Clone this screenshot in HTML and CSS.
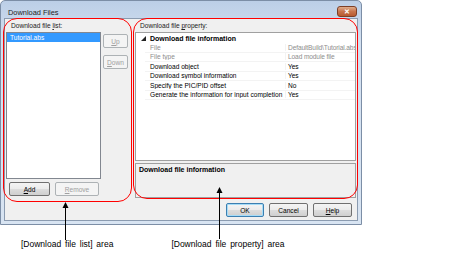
FILE: index.html
```html
<!DOCTYPE html>
<html lang="en">

<head>
    <meta charset="UTF-8">
    <title>Download Files</title>
    <link rel="stylesheet" href="styles.css">
</head>

<body>
    <div class="figure">
        <div class="window">
            <div class="titlebar">
                <span class="title">Download Files</span>
                <span class="close">&#x2715;</span>
            </div>
            <div class="client">
                <div class="panes">
                    <!-- Download file list -->
                    <div class="left-pane">
                        <div class="pane-label">Download file <u>l</u>ist:</div>
                        <div class="list-row">
                            <div class="listbox">
                                <div class="list-item selected">Tutorial.abs</div>
                            </div>
                            <div class="side-buttons">
                                <button class="btn side" disabled><u>U</u>p</button>
                                <button class="btn side" disabled><u>D</u>own</button>
                            </div>
                        </div>
                        <div class="add-row">
                            <button class="btn add"><u>A</u>dd</button>
                            <button class="btn remove" disabled><u>R</u>emove</button>
                        </div>
                    </div>

                    <!-- Download file property -->
                    <div class="right-pane">
                        <div class="pane-label">Download file <u>p</u>roperty:</div>
                        <div class="grid">
                            <div class="category">
                                <svg class="expander" width="5" height="5" viewBox="0 0 5 5">
                                    <polygon points="5,0 5,5 0,5" fill="#222" />
                                </svg>
                                <span>Download file information</span>
                            </div>
                            <div class="prop disabled">
                                <span class="name">File</span>
                                <span class="value">DefaultBuild\Tutorial.abs</span>
                            </div>
                            <div class="prop disabled">
                                <span class="name">File type</span>
                                <span class="value">Load module file</span>
                            </div>
                            <div class="prop">
                                <span class="name">Download object</span>
                                <span class="value">Yes</span>
                            </div>
                            <div class="prop">
                                <span class="name">Download symbol information</span>
                                <span class="value">Yes</span>
                            </div>
                            <div class="prop">
                                <span class="name">Specify the PIC/PID offset</span>
                                <span class="value">No</span>
                            </div>
                            <div class="prop">
                                <span class="name">Generate the information for input completion</span>
                                <span class="value">Yes</span>
                            </div>
                        </div>
                        <div class="description">Download file information</div>
                    </div>
                </div>

                <div class="dialog-buttons">
                    <button class="btn default">OK</button>
                    <button class="btn">Cancel</button>
                    <button class="btn"><u>H</u>elp</button>
                </div>
            </div>
        </div>

        <!-- Annotation overlays -->
        <div class="outline outline-list"></div>
        <div class="outline outline-prop"></div>
        <svg class="arrow arrow-list" width="7" height="38" viewBox="0 0 7 38">
            <polygon points="3.5,0 6.5,6 0.5,6" fill="#000" />
            <line x1="3.5" y1="5" x2="3.5" y2="38" stroke="#000" stroke-width="1" />
        </svg>
        <svg class="arrow arrow-prop" width="7" height="52" viewBox="0 0 7 52">
            <polygon points="3.5,0 6.5,6 0.5,6" fill="#000" />
            <line x1="3.5" y1="5" x2="3.5" y2="52" stroke="#000" stroke-width="1" />
        </svg>

        <div class="captions">
            <span class="caption">[Download file list] area</span>
            <span class="caption">[Download file property] area</span>
        </div>
    </div>
</body>

</html>
```

FILE: styles.css
```css
/* Basic Reset */
html,
body {
    margin: 0;
    padding: 0;
    background: #ffffff;
}

body {
    font-family: 'Liberation Sans', Arial, sans-serif;
    color: #000000;
}

u {
    text-decoration: underline;
}

/* Figure */
.figure {
    position: relative;
    width: 474px;
    height: 255px;
}

/* Window frame */
.window {
    width: 362px;
    height: 225px;
    box-sizing: border-box;
    border: 1px solid #7c8ea6;
    border-radius: 5px 5px 0 0;
    background: linear-gradient(#bccfe7, #d3e0f0 40px, #d8e4f2);
    display: flex;
    flex-direction: column;
    padding: 0 3px 3px 3px;
}

.titlebar {
    height: 17px;
    display: flex;
    align-items: center;
    justify-content: space-between;
    padding-left: 4px;
}

.title {
    font-size: 7.4px;
    color: #1e1e1e;
    margin-top: 5px;
}

.close {
    width: 20px;
    height: 11px;
    margin-top: 4px;
    margin-right: 1px;
    box-sizing: border-box;
    border: 1px solid #7d3f26;
    border-radius: 3px;
    background: linear-gradient(#e0ad8c, #c8744c 50%, #b85a30);
    color: #ffffff;
    font-size: 7px;
    font-weight: bold;
    line-height: 9px;
    text-align: center;
}

/* Client area */
.client {
    flex: 1;
    background: #f0f0f0;
    border: 1px solid #8b9bb0;
    display: flex;
    flex-direction: column;
    padding: 0 1px 0 1px;
    font-size: 6.6px;
}

.panes {
    display: flex;
    gap: 7px;
    height: 179px;
}

.pane-label {
    height: 13px;
    line-height: 14px;
    padding-left: 5px;
    color: #222222;
}

/* Left pane */
.left-pane {
    width: 122px;
    display: flex;
    flex-direction: column;
}

.list-row {
    display: flex;
    gap: 2px;
}

.listbox {
    width: 95px;
    height: 147px;
    box-sizing: border-box;
    border: 1px solid #828790;
    background: #ffffff;
}

.list-item {
    height: 9px;
    line-height: 9px;
    padding-left: 3px;
}

.list-item.selected {
    background: #3399ff;
    color: #ffffff;
}

.side-buttons {
    display: flex;
    flex-direction: column;
    gap: 7px;
    padding-top: 2px;
}

.add-row {
    display: flex;
    gap: 5px;
    margin-top: 3px;
    padding-left: 3px;
}

/* Buttons */
.btn {
    height: 14px;
    width: 39px;
    padding: 0;
    box-sizing: border-box;
    border: 1px solid #707070;
    border-radius: 2px;
    background: linear-gradient(#f4f4f4, #ebebeb 50%, #dddddd 51%, #cfcfcf);
    font-family: 'Liberation Sans', Arial, sans-serif;
    font-size: 6.6px;
    color: #000000;
}

.btn:disabled {
    border-color: #adb2b5;
    background: #f4f4f4;
    color: #a0a0a0;
}

.btn.side {
    width: 25px;
}

.btn.add {
    width: 41px;
}

.btn.remove {
    width: 44px;
}

.btn.default {
    width: 38px;
    border-color: #3c7fb1;
    box-shadow: inset 0 0 0 1px #a6dcf7;
}

/* Right pane */
.right-pane {
    width: 221px;
    display: flex;
    flex-direction: column;
}

.grid {
    height: 129px;
    box-sizing: border-box;
    border: 1px solid #a0a0a0;
    background: #ffffff;
    overflow: hidden;
}

.category {
    height: 10px;
    display: flex;
    align-items: center;
    gap: 4px;
    padding-left: 5px;
    font-weight: bold;
    font-size: 7px;
}

.prop {
    height: 9.5px;
    display: flex;
    align-items: center;
    margin-left: 9px;
    border-bottom: 1px solid #f3f3f3;
    box-sizing: border-box;
}

.prop .name {
    width: 135px;
    flex-shrink: 0;
    padding-left: 5px;
    white-space: nowrap;
    overflow: hidden;
    border-right: 1px solid #f3f3f3;
}

.prop .value {
    padding-left: 2px;
    white-space: nowrap;
    letter-spacing: -0.12px;
}

.prop.disabled {
    color: #8d8d8d;
}

.description {
    height: 35px;
    margin-top: 2px;
    box-sizing: border-box;
    border: 1px solid #a0a0a0;
    background: #f0f0f0;
    padding: 2px 3px;
    font-weight: bold;
    font-size: 7px;
}

.dialog-buttons {
    display: flex;
    justify-content: flex-end;
    gap: 5px;
    margin-top: 5px;
    padding-right: 4px;
}

/* Annotation overlays */
.outline {
    position: absolute;
    border: 1.2px solid #ff0000;
    border-radius: 14px;
    box-sizing: border-box;
}

.outline-list {
    left: 3px;
    top: 18px;
    width: 129px;
    height: 184px;
}

.outline-prop {
    left: 133px;
    top: 18px;
    width: 225px;
    height: 181px;
}

.arrow {
    position: absolute;
}

.arrow-list {
    left: 62px;
    top: 202px;
}

.arrow-prop {
    left: 216px;
    top: 187px;
}

.captions {
    position: absolute;
    top: 239px;
    left: 21px;
    display: flex;
    gap: 58px;
}

.caption {
    font-size: 8.5px;
    word-spacing: 1.5px;
    color: #000000;
}
```
